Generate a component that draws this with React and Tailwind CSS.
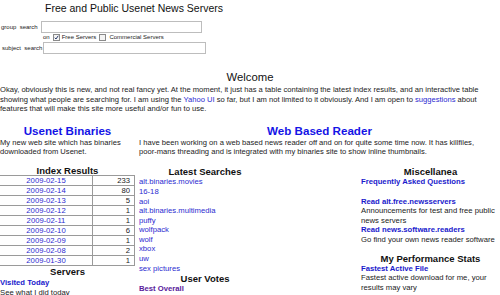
const indexResults = [
  ['2009-02-15', 233],
  ['2009-02-14', 80],
  ['2009-02-13', 5],
  ['2009-02-12', 1],
  ['2009-02-11', 1],
  ['2009-02-10', 6],
  ['2009-02-09', 1],
  ['2009-02-08', 2],
  ['2009-01-30', 1]
]

const searches = [
  'alt.binaries.movies',
  '16-18',
  'aoi',
  'alt.binaries.multimedia',
  'puffy',
  'wolfpack',
  'wolf',
  'xbox',
  'uw',
  'sex pictures'
]

const CheckBox = ({ checked }) => (
  <span className="inline-block w-[7px] h-[7px] border border-[#8a8a8a] bg-[#f4f4f4] relative">
    {checked && (
      <svg className="absolute left-0 top-0 w-[5px] h-[5px]" viewBox="0 0 10 10">
        <path d="M1.5 5.5 L4 8 L8.5 1.5" fill="none" stroke="#2a3a6a" strokeWidth="2" />
      </svg>
    )}
  </span>
)

const SubHead = ({ children, className = '' }) => (
  <div className={`text-center font-bold text-[9.5px] text-[#111] ${className}`}>{children}</div>
)

const App = () => {
  return (
    <div className="w-[500px] h-[295px] overflow-hidden bg-white font-['Liberation_Sans',Arial,sans-serif] text-[#222]">
      <h1 className="w-[268px] h-[16px] text-center text-[10.5px] leading-[16px] text-[#111]">
        Free and Public Usenet News Servers
      </h1>

      <div className="mt-[5px] flex items-center h-[12px] text-[6px] leading-[12px]">
        <span className="pl-px whitespace-pre">group  search</span>
        <span className="ml-[3px] w-[161px] h-[12px] border border-[#bdbdbd] bg-white" />
      </div>
      <div className="flex items-center h-[9px] text-[6px] leading-[9px] pl-[43px]">
        <span>on</span>
        <span className="ml-[3px] flex"><CheckBox checked /></span>
        <span className="ml-[2px]">Free Servers</span>
        <span className="ml-[3px] flex"><CheckBox /></span>
        <span className="ml-[3px]">Commercial Servers</span>
      </div>
      <div className="flex items-center h-[12px] text-[6px] leading-[12px]">
        <span className="pl-[2px] whitespace-pre">subject  search</span>
        <span className="ml-px w-[163px] h-[12px] border border-[#bdbdbd] bg-white" />
      </div>

      <h2 className="mt-[15px] h-[16px] text-center text-[11.3px] leading-[16px] text-[#111]">Welcome</h2>
      <p className="text-[7.6px] leading-[9.5px] whitespace-nowrap">
        Okay, obviously this is new, and not real fancy yet. At the moment, it just has a table containing the latest index results, and an interactive table
        <br />
        showing what people are searching for. I am using the <span className="text-[#2b2bd0]">Yahoo UI</span> so far, but I am not limited to it obviously. And I am open to <span className="text-[#2b2bd0]">suggestions</span> about
        <br />
        features that will make this site more useful and/or fun to use.
      </p>

      <div className="mt-[9px] flex">
        <div className="w-[135px]">
          <div className="h-[15px] text-center font-bold text-[11.6px] leading-[15px] text-[#1414e6]">Usenet Binaries</div>
          <p className="text-[7.6px] leading-[9.4px] whitespace-nowrap">
            My new web site which has binaries
            <br />
            downloaded from Usenet.
          </p>
        </div>
        <div className="ml-[4px] flex-1">
          <div className="h-[15px] text-center font-bold text-[11.6px] leading-[15px] text-[#1414e6]">Web Based Reader</div>
          <p className="text-[7.6px] leading-[9.4px] whitespace-nowrap">
            I have been working on a web based news reader off and on for quite some time now. It has killfiles,
            <br />
            poor-mans threading and is integrated with my binaries site to show inline thumbnails.
          </p>
        </div>
      </div>

      <div className="mt-[10px] flex text-[7.7px]">
        <div className="w-[135px]">
          <SubHead className="h-[9px] leading-[9px]">Index Results</SubHead>
          <div className="border-t border-[#9a9a9a]">
            {indexResults.map(([date, count]) => (
              <div key={date} className="flex h-[10px] leading-[9px] border-b border-[#9a9a9a]">
                <div className="w-[93px] text-center text-[#2b2bd0] border-r border-[#9a9a9a]">{date}</div>
                <div className="flex-1 text-right pr-[4px] border-r border-[#9a9a9a]">{count}</div>
              </div>
            ))}
          </div>
          <SubHead className="h-[12px] leading-[12px]">Servers</SubHead>
          <div className="font-bold text-[#1a1acc] leading-[9.5px]">Visited Today</div>
          <div className="leading-[9.5px]">See what I did today</div>
        </div>

        <div className="ml-[4px] w-[132px]">
          <SubHead className="h-[11px] leading-[11px]">Latest Searches</SubHead>
          {searches.map((s) => (
            <div key={s} className="h-[9.6px] leading-[9.6px] text-[#2b2bd0]">{s}</div>
          ))}
          <SubHead className="h-[11px] leading-[11px]">User Votes</SubHead>
          <div className="font-bold text-[#5a1a9c] leading-[9.6px]">Best Overall</div>
        </div>

        <div className="ml-[90px] w-[139px] leading-[9.6px]">
          <SubHead className="h-[11px] leading-[11px]">Miscellanea</SubHead>
          <div className="font-bold text-[#1a1acc]">Frequently Asked Questions</div>
          <div className="h-[9.6px]" />
          <div className="font-bold text-[#1a1acc]">Read alt.free.newsservers</div>
          <div>Announcements for test and free public news servers</div>
          <div className="font-bold text-[#1a1acc]">Read news.software.readers</div>
          <div>Go find your own news reader software</div>
          <div className="h-[9.6px]" />
          <SubHead className="h-[9.6px] leading-[9.6px]">My Performance Stats</SubHead>
          <div className="font-bold text-[#1a1acc]">Fastest Active File</div>
          <div>Fastest active download for me, your results may vary</div>
        </div>
      </div>
    </div>
  )
}

export default App
